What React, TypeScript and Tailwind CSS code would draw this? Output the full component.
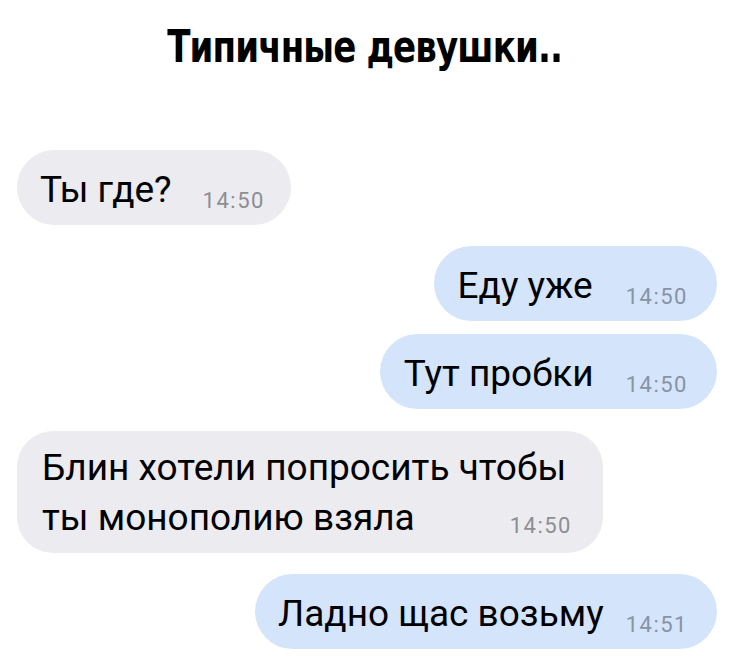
import React from "react";

const font = { fontFamily: '"Roboto", "Liberation Sans", sans-serif' };

function Time({ t, blue, gap, top = "top-[6px]" }: { t: string; blue?: boolean; gap: string; top?: string }) {
  return (
    <span
      className={`text-[22px] tracking-[1.5px] relative ${top} ${gap} ${blue ? "text-[#8793a6]" : "text-[#8e8e93]"}`}
    >
      {t}
    </span>
  );
}

function Bubble({
  text,
  time,
  blue,
  pl,
  pr,
  gap,
}: {
  text: string;
  time: string;
  blue?: boolean;
  pl: string;
  pr: string;
  gap: string;
}) {
  return (
    <div
      className={`h-[75px] rounded-full flex items-center pt-[3px] whitespace-nowrap ${pl} ${pr} ${blue ? "bg-[#d4e4fa]" : "bg-[#ebebf0]"}`}
    >
      <p className="leading-none">
        {text}
        <Time t={time} blue={blue} gap={gap} />
      </p>
    </div>
  );
}

export default function App() {
  return (
    <div className="w-[730px] h-[666px] bg-white overflow-hidden" style={font}>
      <div className="flex justify-center pt-[25px] h-[150px]">
        <h1
          className="text-[44px] font-bold leading-none text-black tracking-[-1px] inline-block scale-x-[0.86]"
          style={{ fontFamily: '"DejaVu Sans Condensed", "DejaVu Sans", sans-serif' }}
        >
          Типичные девушки..
        </h1>
      </div>
      <div className="flex flex-col pl-[17px] pr-[13px] text-black text-[37px]">
        <div className="flex justify-start">
          <Bubble text="Ты где?" time="14:50" pl="pl-[23px]" pr="pr-[26px]" gap="ml-[31px]" />
        </div>
        <div className="flex justify-end mt-[21px]">
          <Bubble text="Еду уже" time="14:50" blue pl="pl-[24px]" pr="pr-[29px]" gap="ml-[33px]" />
        </div>
        <div className="flex justify-end mt-[13px]">
          <Bubble text="Тут пробки" time="14:50" blue pl="pl-[24px]" pr="pr-[29px]" gap="ml-[32px]" />
        </div>
        <div className="flex justify-start mt-[22px]">
          <div className="w-[586px] h-[122px] rounded-[36px] bg-[#ebebf0] pl-[25px] pr-[31px] pt-[12px] flex flex-col whitespace-nowrap">
            <span className="leading-[50px]">Блин хотели попросить чтобы</span>
            <div className="flex justify-between items-baseline leading-[50px]">
              <span>ты монополию взяла</span>
              <Time t="14:50" gap="" top="top-[3px]" />
            </div>
          </div>
        </div>
        <div className="flex justify-end mt-[21px]">
          <div className="h-[77px] flex">
            <Bubble text="Ладно щас возьму" time="14:51" blue pl="pl-[23px]" pr="pr-[29px]" gap="ml-[22px]" />
          </div>
        </div>
      </div>
    </div>
  );
}
